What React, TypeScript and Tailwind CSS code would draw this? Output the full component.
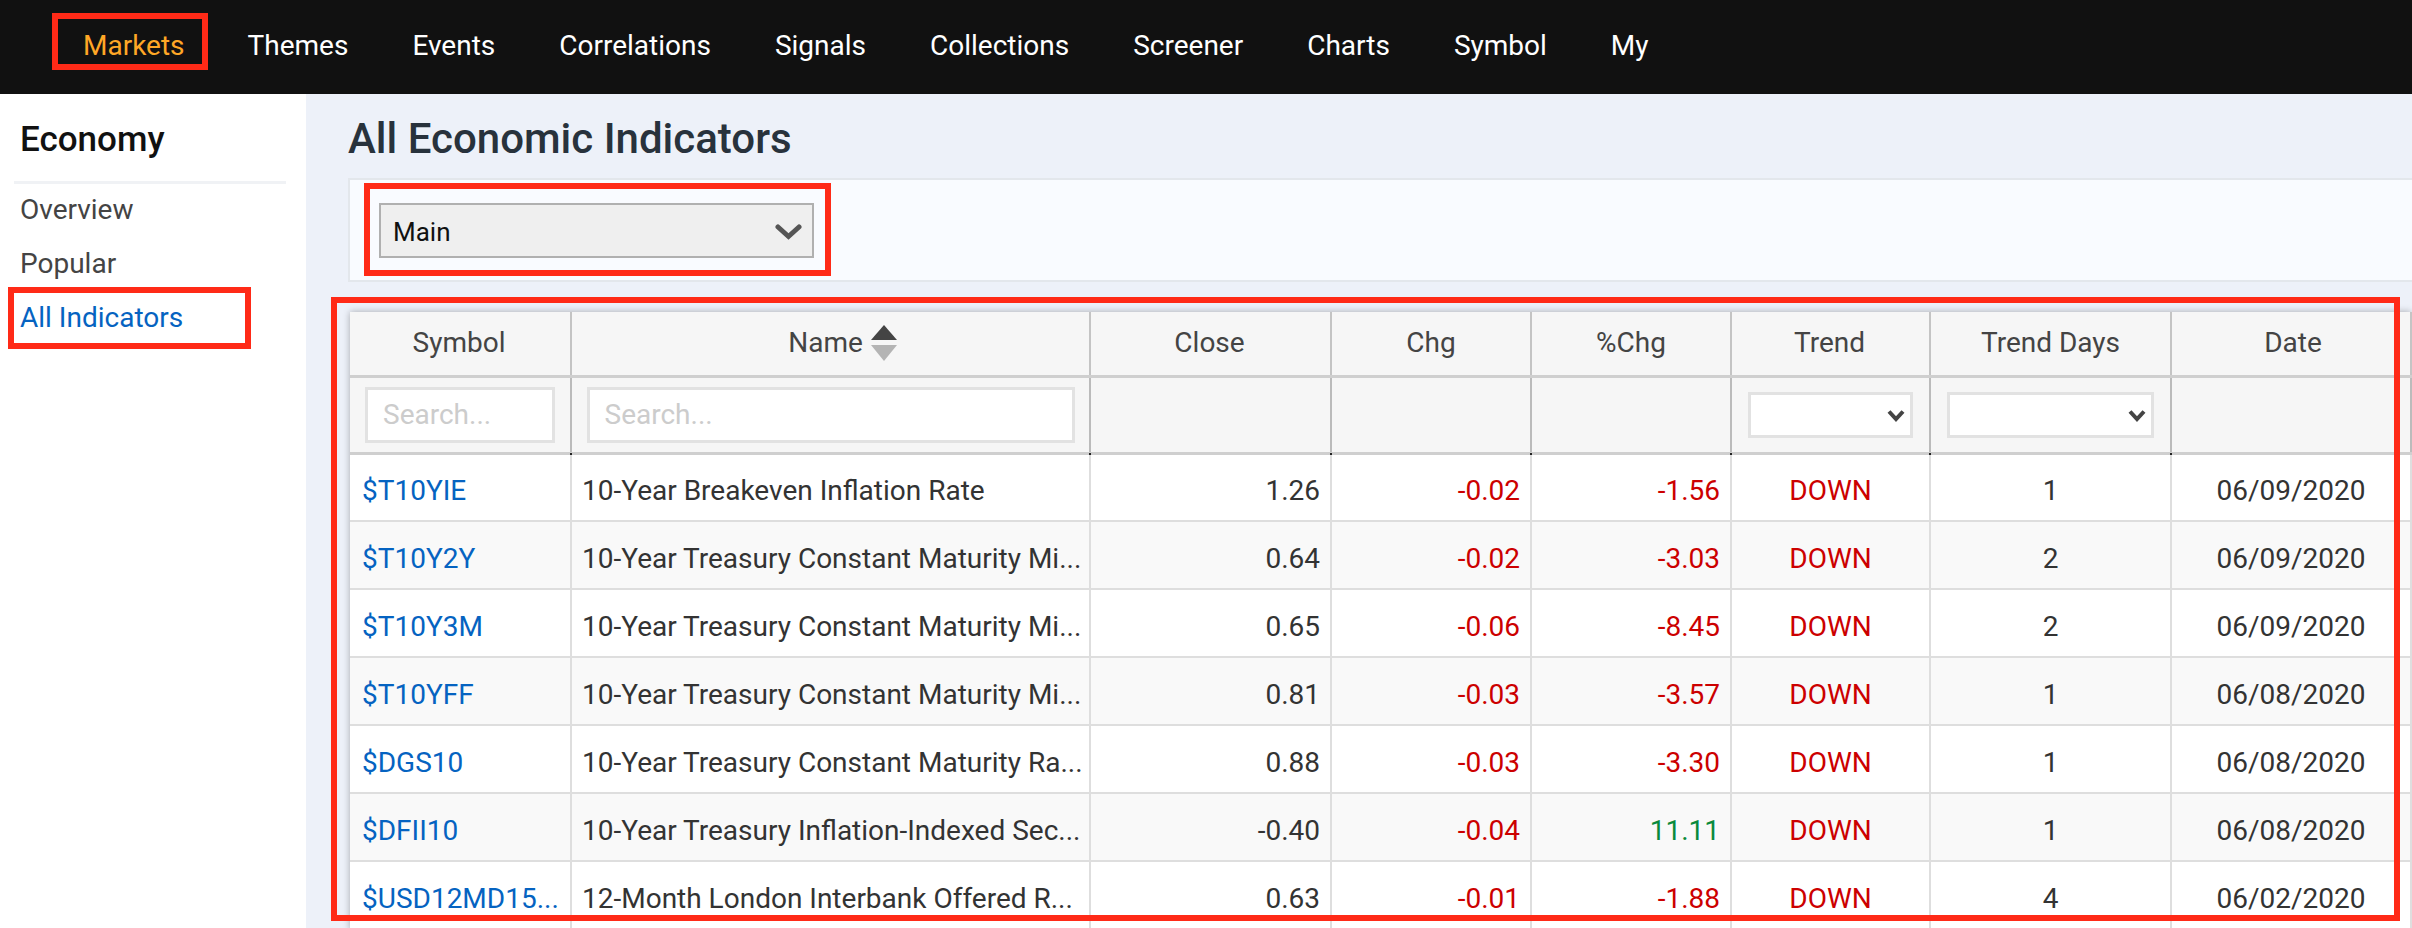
const navItems = ["Markets", "Themes", "Events", "Correlations", "Signals", "Collections", "Screener", "Charts", "Symbol", "My"];

const rows = [
  { symbol: "$T10YIE", name: "10-Year Breakeven Inflation Rate", close: "1.26", chg: "-0.02", pct: "-1.56", days: 1, date: "06/09/2020" },
  { symbol: "$T10Y2Y", name: "10-Year Treasury Constant Maturity Mi...", close: "0.64", chg: "-0.02", pct: "-3.03", days: 2, date: "06/09/2020" },
  { symbol: "$T10Y3M", name: "10-Year Treasury Constant Maturity Mi...", close: "0.65", chg: "-0.06", pct: "-8.45", days: 2, date: "06/09/2020" },
  { symbol: "$T10YFF", name: "10-Year Treasury Constant Maturity Mi...", close: "0.81", chg: "-0.03", pct: "-3.57", days: 1, date: "06/08/2020" },
  { symbol: "$DGS10", name: "10-Year Treasury Constant Maturity Ra...", close: "0.88", chg: "-0.03", pct: "-3.30", days: 1, date: "06/08/2020" },
  { symbol: "$DFII10", name: "10-Year Treasury Inflation-Indexed Sec...", close: "-0.40", chg: "-0.04", pct: "11.11", days: 1, date: "06/08/2020" },
  { symbol: "$USD12MD15...", name: "12-Month London Interbank Offered R...", close: "0.63", chg: "-0.01", pct: "-1.88", days: 4, date: "06/02/2020" },
];

const headCell = "border-r-2 border-[#c4c4c4] bg-[#f6f6f6] p-0 font-normal text-[#444444]";
const filterCell = "relative border-r-2 border-[#bbbbbb] bg-[#f6f6f6] p-0 font-normal";
const bodyCell = "border-r-2 border-b-[2px] border-[#dedede] pt-[8px] whitespace-nowrap";

// small dark mark where the column line meets the thick rule under the filters
function Tick() {
  return <span className="absolute -right-[2px] -bottom-[3px] h-[2px] w-[2px] bg-[#222222]" />;
}

function TableSelect() {
  return (
    <div className="relative mx-auto h-[46px] w-[calc(100%-32px)]">
      <select className="h-full w-full appearance-none border-[3px] border-[#e2e2e2] bg-white outline-none" />
      <svg viewBox="0 0 18 13" className="absolute top-[17px] right-[8px] h-[13px] w-[18px]">
        <path d="M2 2.5 9 10l7-7.5" fill="none" stroke="#444444" strokeWidth="4" />
      </svg>
    </div>
  );
}

export default function App() {
  return (
    <div className="relative h-[928px] w-[2412px] overflow-hidden bg-white font-['Roboto',sans-serif] text-[28px]">
      <header className="flex h-[94px] items-center bg-[#111111] pb-[2px] pl-[50px] text-[28px] text-white">
        {navItems.map((item, i) => (
          <span key={item} className={i === 0 ? "pr-[31px] pl-[33px] text-[#ffa726]" : "px-[32px]"}>{item}</span>
        ))}
      </header>

      <div className="flex h-[834px]">
        <aside className="w-[306px] shrink-0 bg-white pr-[20px] pl-[14px]">
          <h2 className="flex h-[90px] items-center border-b-[3px] border-[#f0f2f5] px-[6px] pt-[6px] text-[35px] font-medium text-[#111111]">Economy</h2>
          <ul className="-mt-[1px] px-[6px] text-[#444444]">
            <li className="flex h-[54px] items-center">Overview</li>
            <li className="flex h-[54px] items-center">Popular</li>
            <li className="flex h-[54px] items-center text-[#0563c1]">All Indicators</li>
          </ul>
        </aside>

        <main className="min-w-0 flex-1 overflow-hidden bg-[#edf1f9] pl-[42px]">
          <h1 className="flex h-[84px] items-center pt-[4px] text-[42px] font-medium text-[#28323c]">All Economic Indicators</h1>
          <div className="flex h-[104px] items-center border-y-2 border-l-2 border-[#e3e7ec] bg-[#f9fbff] pl-[29px]">
            <div className="relative h-[55px] w-[435px]">
              <select className="h-full w-full appearance-none border-2 border-[#b0b0b0] bg-[#efefef] pt-[4px] pl-[12px] text-[26px] text-[#111111] outline-none">
                <option>Main</option>
              </select>
              <svg viewBox="0 0 27 16" className="absolute top-[21px] right-[12px] h-[16px] w-[27px]">
                <path d="M3 3l10.5 9.5L24 3" fill="none" stroke="#555555" strokeWidth="5" strokeLinecap="round" />
              </svg>
            </div>
          </div>

          <div className="mt-[30px] ml-[2px] w-[2061px] shadow-[0_0_7px_rgba(0,0,0,0.3)]">
            <table className="w-[2061px] table-fixed border-collapse text-[#333333]">
              <colgroup>
                <col className="w-[221px]" />
                <col className="w-[519px]" />
                <col className="w-[241px]" />
                <col className="w-[200px]" />
                <col className="w-[200px]" />
                <col className="w-[199px]" />
                <col className="w-[241px]" />
                <col className="w-[240px]" />
              </colgroup>
              <thead>
                <tr className="h-[64px]">
                  <th className={`${headCell} pr-[2px]`}>Symbol</th>
                  <th className={headCell}>
                    <span className="inline-flex items-center gap-[8px] pl-[24px]">
                      Name
                      <svg viewBox="0 0 26 36" className="h-[36px] w-[26px]">
                        <path d="M13 0 26 15H0z" fill="#444444" />
                        <path d="M0 20h26L13 36z" fill="#b4b4b4" />
                      </svg>
                    </span>
                  </th>
                  <th className={`${headCell} pr-[2px]`}>Close</th>
                  <th className={headCell}>Chg</th>
                  <th className={headCell}>%Chg</th>
                  <th className={`${headCell} pr-[2px]`}>Trend</th>
                  <th className={headCell}>Trend Days</th>
                  <th className={`${headCell} pl-[4px]`}>Date</th>
                </tr>
                <tr className="h-[77px] border-y-[3px] border-[#cfcfcf]">
                  <th className={filterCell}>
                    <input placeholder="Search..." className="mx-auto block h-[56px] w-[190px] border-[3px] border-[#e2e2e2] bg-white pl-[15px] font-normal outline-none placeholder:text-[#cccccc]" />
                    <Tick />
                  </th>
                  <th className={filterCell}>
                    <input placeholder="Search..." className="mx-auto block h-[56px] w-[488px] border-[3px] border-[#e2e2e2] bg-white pl-[15px] font-normal outline-none placeholder:text-[#cccccc]" />
                    <Tick />
                  </th>
                  <th className={filterCell}><Tick /></th>
                  <th className={filterCell}><Tick /></th>
                  <th className={filterCell}><Tick /></th>
                  <th className={filterCell}><TableSelect /><Tick /></th>
                  <th className={filterCell}><TableSelect /><Tick /></th>
                  <th className={filterCell} />
                </tr>
              </thead>
              <tbody>
                {rows.map((r, i) => (
                  <tr key={r.symbol} className={i % 2 === 0 ? "h-[68px] bg-white" : "h-[68px] bg-[#f9f9f9]"}>
                    <td className={`${bodyCell} pl-[12px]`}><span className="text-[#0563c1]">{r.symbol}</span></td>
                    <td className={`${bodyCell} pl-[10px]`}>{r.name}</td>
                    <td className={`${bodyCell} pr-[10px] text-right`}>{r.close}</td>
                    <td className={`${bodyCell} pr-[10px] text-right text-[#cc0000]`}>{r.chg}</td>
                    <td className={r.pct.startsWith("-") ? `${bodyCell} pr-[10px] text-right text-[#cc0000]` : `${bodyCell} pr-[10px] text-right text-[#0a8a3c]`}>{r.pct}</td>
                    <td className={`${bodyCell} text-center text-[#cc0000]`}>DOWN</td>
                    <td className={`${bodyCell} text-center`}>{r.days}</td>
                    <td className={`${bodyCell} text-center`}>{r.date}</td>
                  </tr>
                ))}
              </tbody>
            </table>
          </div>
        </main>
      </div>

      {/* red annotation boxes over the page */}
      <div className="absolute top-[13px] left-[52px] h-[57px] w-[156px] border-[6px] border-[#ff2a17]" />
      <div className="absolute top-[287px] left-[8px] h-[62px] w-[243px] border-[6px] border-[#ff2a17]" />
      <div className="absolute top-[183px] left-[364px] h-[93px] w-[467px] border-[6px] border-[#ff2a17]" />
      <div className="absolute top-[297px] left-[331px] h-[624px] w-[2069px] border-[6px] border-[#ff2a17]" />
    </div>
  );
}
